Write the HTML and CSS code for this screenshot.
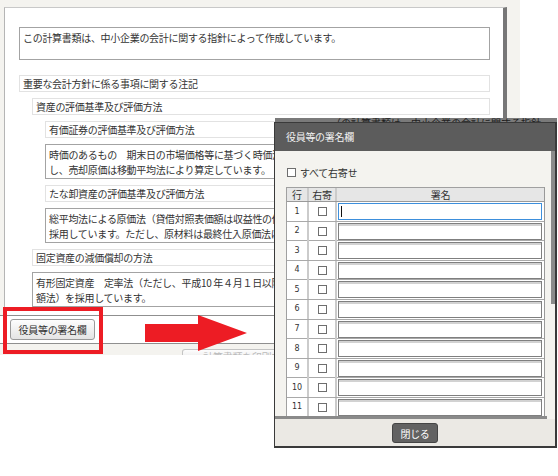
FILE: index.html
```html
<!DOCTYPE html>
<html lang="ja">
<head>
    <meta charset="UTF-8">
    <meta name="viewport" content="width=device-width, initial-scale=1.0">
    <title>役員等の署名欄</title>
    <link rel="stylesheet" href="styles.css">
</head>
<body>

<div class="stage">
    <div class="shot">
        <div class="panel">
            <div class="note note-main">この計算書類は、中小企業の会計に関する指針によって作成しています。</div>
            <div class="item item-top">重要な会計方針に係る事項に関する注記</div>
            <div class="level2">
                <div class="item">資産の評価基準及び評価方法</div>
                <div class="level3">
                    <div class="item">有価証券の評価基準及び評価方法</div>
                    <div class="note">時価のあるもの　期末日の市場価格等に基づく時価法（評価差額は全部純資産直入法により処理<br>し、売却原価は移動平均法により算定しています。</div>
                    <div class="item">たな卸資産の評価基準及び評価方法</div>
                    <div class="note">総平均法による原価法（貸借対照表価額は収益性の低下に基づく簿価切下げの方法により算定）を<br>採用しています。ただし、原材料は最終仕入原価法によっています。</div>
                </div>
                <div class="item">固定資産の減価償却の方法</div>
                <div class="note">有形固定資産　定率法（ただし、平成10 年４月１日以降に取得した建物（附属設備を除く）は定<br>額法）を採用しています。</div>
            </div>
        </div>
        <div class="toolbar">
            <button class="btn">役員等の署名欄</button>
        </div>
        <div class="bottom">
            <button class="btn btn-next">計算書類を印刷する</button>
        </div>
    </div>

    <div class="mark-box"></div>
    <svg class="mark-arrow" width="102" height="36" viewBox="0 0 102 36">
        <polygon points="0,9 53,9 53,0 102,18 53,36 53,27 0,27" fill="#ed1c24"/>
    </svg>

    <div class="dialog-peek">
        <span class="peek-bar"></span><span class="peek-bar"></span>
        <span class="peek-text">（の計算書類は、中小企業の会計に関する指針</span><span class="peek-bar"></span>
    </div>

    <div class="dialog">
        <div class="dialog-head">役員等の署名欄</div>
        <div class="dialog-body">
            <label class="check-all"><input type="checkbox" class="cb"> すべて右寄せ</label>
            <div class="sign-table">
                <div class="sign-row sign-head">
                    <div class="c-no">行</div>
                    <div class="c-chk">右寄</div>
                    <div class="c-sign">署名</div>
                </div>
                <div class="sign-row">
                    <div class="c-no">1</div>
                    <div class="c-chk"><input type="checkbox" class="cb"></div>
                    <div class="c-sign"><div class="field"><input type="text" class="sign-input is-focus"><span class="caret"></span></div></div>
                </div>
                <div class="sign-row"><div class="c-no">2</div><div class="c-chk"><input type="checkbox" class="cb"></div><div class="c-sign"><input type="text" class="sign-input"></div></div>
                <div class="sign-row"><div class="c-no">3</div><div class="c-chk"><input type="checkbox" class="cb"></div><div class="c-sign"><input type="text" class="sign-input"></div></div>
                <div class="sign-row"><div class="c-no">4</div><div class="c-chk"><input type="checkbox" class="cb"></div><div class="c-sign"><input type="text" class="sign-input"></div></div>
                <div class="sign-row"><div class="c-no">5</div><div class="c-chk"><input type="checkbox" class="cb"></div><div class="c-sign"><input type="text" class="sign-input"></div></div>
                <div class="sign-row"><div class="c-no">6</div><div class="c-chk"><input type="checkbox" class="cb"></div><div class="c-sign"><input type="text" class="sign-input"></div></div>
                <div class="sign-row"><div class="c-no">7</div><div class="c-chk"><input type="checkbox" class="cb"></div><div class="c-sign"><input type="text" class="sign-input"></div></div>
                <div class="sign-row"><div class="c-no">8</div><div class="c-chk"><input type="checkbox" class="cb"></div><div class="c-sign"><input type="text" class="sign-input"></div></div>
                <div class="sign-row"><div class="c-no">9</div><div class="c-chk"><input type="checkbox" class="cb"></div><div class="c-sign"><input type="text" class="sign-input"></div></div>
                <div class="sign-row"><div class="c-no">10</div><div class="c-chk"><input type="checkbox" class="cb"></div><div class="c-sign"><input type="text" class="sign-input"></div></div>
                <div class="sign-row"><div class="c-no">11</div><div class="c-chk"><input type="checkbox" class="cb"></div><div class="c-sign"><input type="text" class="sign-input"></div></div>
            </div>
            <div class="vbar"></div>
        </div>
        <div class="hbar"></div>
        <div class="dialog-foot">
            <button class="btn-close">閉じる</button>
        </div>
    </div>
</div>

</body>
</html>
```

FILE: styles.css
```css
body {
    margin: 0;
    background-color: #fff;
    font-family: "Noto Sans CJK JP", "Noto Sans", sans-serif;
    font-size: 10px;
    letter-spacing: -0.3px;
    color: #333;
}

.stage {
    position: relative;
    width: 558px;
    height: 476px;
    overflow: hidden;
}

/* left screenshot */
.shot {
    width: 520px;
    height: 355px;
    overflow: hidden;
    background-color: #f4f3ef;
    padding-top: 7px;
    box-sizing: border-box;
}

.panel {
    width: 503px;
    margin-left: 4px;
    padding: 0 13px 8px 14px;
    box-sizing: border-box;
    background-color: #fff;
    border-top: 1px solid #c8c8c8;
    border-left: 1px solid #b5b5b5;
    border-right: 4px solid #777;
}

.item {
    height: 17px;
    margin-top: 6px;
    padding: 0 3px;
    box-sizing: border-box;
    border: 1px solid #e2e2e2;
    line-height: 15px;
    white-space: nowrap;
    overflow: hidden;
}

.item-top {
    margin-top: 15px;
}

.note {
    height: 35px;
    margin-top: 6px;
    padding: 2px 3px 1px;
    box-sizing: border-box;
    border: 1px solid #a3a3a3;
    line-height: 15px;
    white-space: nowrap;
    overflow: hidden;
}

.note-main {
    height: 33px;
    margin-top: 19px;
}

.level2 {
    padding-left: 13px;
}

.level3 {
    padding-left: 13px;
}

.toolbar {
    height: 29px;
    padding: 3px 0 0 10px;
    box-sizing: border-box;
    background-color: #fff;
    border-top: 1px solid #8f8f8f;
    border-bottom: 1px solid #8f8f8f;
}

.btn {
    width: 85px;
    height: 21px;
    padding: 0;
    border: 1px solid #9a9a9a;
    border-radius: 3px;
    background: linear-gradient(#fdfdfd, #e4e4e4);
    font-family: inherit;
    font-size: 10px;
    letter-spacing: -0.3px;
    color: #333;
}

.bottom {
    padding: 5px 0 0 182px;
}

.btn-next {
    width: 130px;
    height: 13px;
    line-height: 9px;
    vertical-align: top;
    color: #bbb;
    border-color: #c4c4c4;
    border-bottom: none;
    border-radius: 3px 3px 0 0;
}

/* annotations */
.mark-box {
    position: absolute;
    left: 3px;
    top: 307px;
    width: 100px;
    height: 47px;
    box-sizing: border-box;
    border: 4px solid #ed1c24;
}

.mark-arrow {
    position: absolute;
    left: 145px;
    top: 315px;
}

/* strip of the page behind the dialog */
.dialog-peek {
    position: absolute;
    left: 275px;
    top: 118px;
    width: 282px;
    height: 5px;
    display: flex;
    align-items: flex-end;
    overflow: hidden;
    background-color: #7a7a7a;
    color: #1e1e1e;
}

.peek-bar {
    width: 1px;
    height: 5px;
    margin-left: 12px;
    margin-right: 16px;
    background-color: #333;
}

.peek-text {
    margin-bottom: -5px;
    line-height: 10px;
    white-space: nowrap;
    letter-spacing: 0;
}

/* dialog */
.dialog {
    position: absolute;
    left: 274px;
    top: 122px;
    width: 283px;
    height: 326px;
    box-sizing: border-box;
    display: flex;
    flex-direction: column;
    background-color: #f4f3ef;
    border: 1px solid #3a3a3a;
    border-right-width: 2px;
    border-bottom-width: 2px;
}

.dialog-head {
    height: 28px;
    padding-left: 11px;
    line-height: 28px;
    background-color: #5c5c5c;
    color: #f2f2f2;
}

.dialog-body {
    position: relative;
    height: 265px;
    padding: 15px 0 0 11px;
    box-sizing: border-box;
    overflow: hidden;
}

.check-all {
    display: flex;
    align-items: center;
    gap: 4px;
    height: 12px;
    padding-left: 1px;
    color: #333;
}

.cb {
    appearance: none;
    width: 9px;
    height: 9px;
    margin: 0;
    box-sizing: border-box;
    border: 1px solid #6e6e6e;
    background-color: #fff;
}

.sign-table {
    width: 257px;
    margin-top: 9px;
    border-left: 1px solid #a0a0a0;
    border-right: 1px solid #999;
}

.sign-row {
    display: grid;
    grid-template-columns: 22px 28px 1fr;
    height: 19.6px;
    box-sizing: border-box;
    border-bottom: 1px solid #a9a9a9;
    background-color: #fff;
}

.sign-head {
    height: 15px;
    border-top: 1px solid #a0a0a0;
    border-bottom-color: #999;
    background-color: #e6e6e6;
    line-height: 13px;
    text-align: center;
    color: #333;
}

.c-no,
.c-chk {
    display: flex;
    align-items: center;
    justify-content: center;
    border-right: 2px solid #cbcbcb;
}

.c-no {
    font-family: "DejaVu Sans", sans-serif;
    font-size: 8px;
    line-height: 10px;
    letter-spacing: 0;
    color: #333;
}

.sign-head .c-no {
    font-family: inherit;
    font-size: 10px;
    line-height: 13px;
}

.c-sign {
    display: flex;
    align-items: center;
    justify-content: center;
    padding: 1px 2px 1px 1px;
}

.sign-head .c-sign {
    padding: 0;
}

.field {
    position: relative;
    width: 100%;
    height: 100%;
}

.sign-input {
    display: block;
    width: 100%;
    height: 100%;
    margin: 0;
    padding: 0;
    box-sizing: border-box;
    border: 1px solid #7f7f7f;
    box-shadow: inset 0 2px 0 #d2d2d2;
    background-color: #fff;
}

.sign-input.is-focus {
    border-color: #3d8fdc;
    box-shadow: none;
}

.caret {
    position: absolute;
    left: 3px;
    top: 3px;
    width: 1px;
    height: 11px;
    background-color: #111;
}

.vbar {
    position: absolute;
    right: 0;
    top: 0;
    width: 4px;
    height: 153px;
    background-color: #8b8b8b;
}

.hbar {
    height: 3px;
    margin-right: 8px;
    background-color: #8a8a8a;
}

.dialog-foot {
    flex: 1;
    display: flex;
    justify-content: center;
    padding-top: 4px;
    background-color: #ebe9e4;
}

.btn-close {
    width: 46px;
    height: 20px;
    padding: 0;
    border: 1px solid #454545;
    border-radius: 3px;
    background-color: #626262;
    font-family: inherit;
    font-size: 10px;
    letter-spacing: -0.3px;
    color: #fff;
}
```
